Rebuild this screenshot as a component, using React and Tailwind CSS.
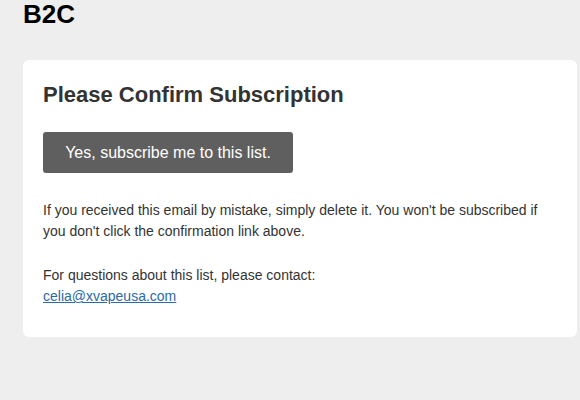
import React from 'react';

const App = () => {
  return (
    <div className="min-h-[400px] w-[580px] bg-[#eeeeee] font-['Liberation_Sans',Arial,sans-serif] overflow-hidden">
      <div className="pl-[23px] pr-[3px]">
        <h1 className="text-[26px] leading-[28px] font-bold text-black">B2C</h1>

        <div className="mt-[32px] bg-white rounded-[6px] h-[277px] px-5 pt-[22px]">
          <h2 className="text-[22px] leading-[26px] font-bold text-[#333333]">
            Please Confirm Subscription
          </h2>

          <button className="mt-[24px] w-[250px] h-[41px] bg-[#5f5f5f] rounded-[3px] text-white text-[16px]">
            Yes, subscribe me to this list.
          </button>

          <p className="mt-[27px] text-[14px] leading-[21px] text-[#333333]">
            If you received this email by mistake, simply delete it. You won't be subscribed if you don't click the confirmation link above.
          </p>

          <p className="mt-[23px] text-[14px] leading-[21px] text-[#333333]">
            For questions about this list, please contact:
            <br />
            <a href="#" className="text-[#2a6aa8] underline">celia@xvapeusa.com</a>
          </p>
        </div>
      </div>
    </div>
  );
};

export default App;
